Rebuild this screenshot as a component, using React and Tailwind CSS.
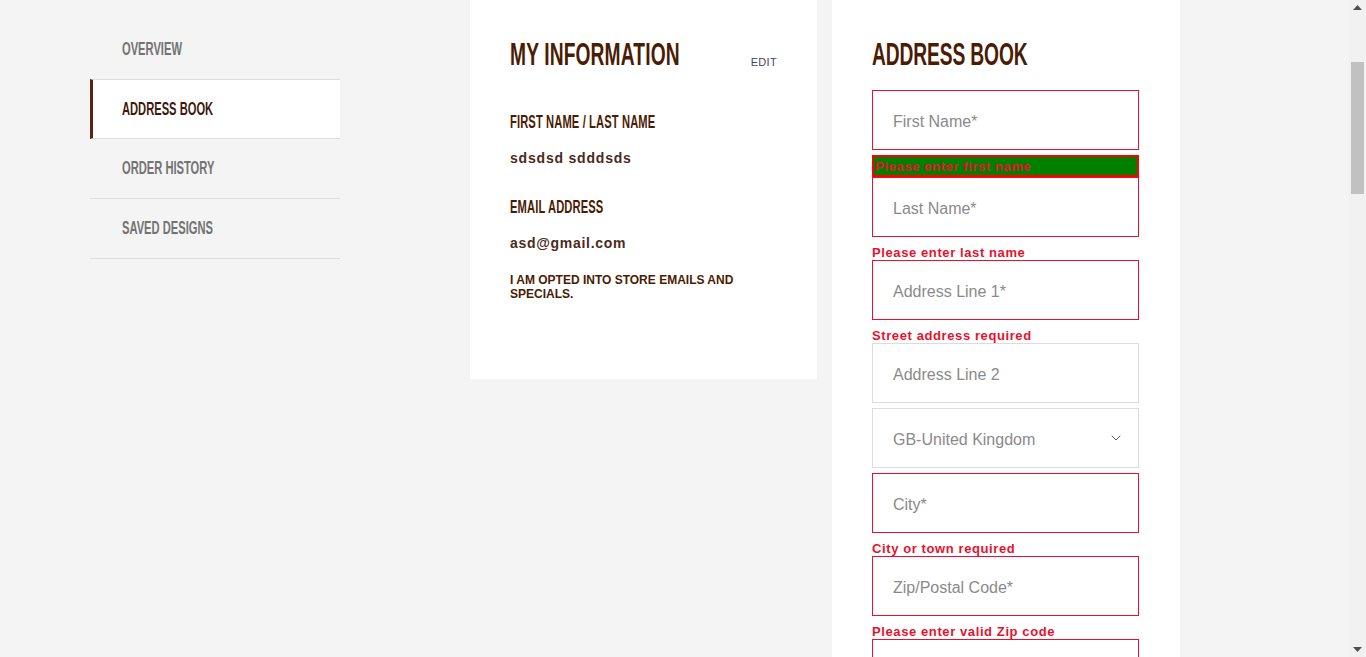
import { ChevronDown } from "lucide-react";

const body = "font-['Liberation_Sans',Arial,sans-serif]";

// condensed headline look: Arial-metric bold squeezed horizontally
const Cond = ({ className = "", children }) => (
  <span
    className={`${body} inline-block origin-left scale-x-[0.62] whitespace-nowrap font-bold ${className}`}
  >
    {children}
  </span>
);

const navItems = [
  { label: "OVERVIEW", active: false },
  { label: "ADDRESS BOOK", active: true },
  { label: "ORDER HISTORY", active: false },
  { label: "SAVED DESIGNS", active: false },
];

const Field = ({ placeholder, error, select }) => (
  <div
    className={`h-[60px] flex items-center justify-between px-5 bg-white border ${
      error ? "border-[#e8112d]" : "border-[#dcdcdc]"
    }`}
  >
    <span className={`${body} pt-[3px] text-[16px] text-[#8a8a8a]`}>{placeholder}</span>
    {select && <ChevronDown className="w-4 h-4 text-[#555] mr-[-6px]" strokeWidth={1.5} />}
  </div>
);

const ErrorText = ({ children }) => (
  <div className={`${body} mt-[5px] h-[18px] leading-[21px] text-[13px] font-bold tracking-[0.6px] text-[#e8112d]`}>
    {children}
  </div>
);

const App = () => {
  return (
    <div className="h-[657px] w-[1366px] overflow-hidden flex bg-[#f4f4f4]">
      <div className="flex-1 flex items-start pl-[90px]">
        {/* sidebar */}
        <nav className="w-[250px] mt-[19px]">
          {navItems.map((item, i) => (
            <div
              key={item.label}
              className={`h-[60px] flex items-center ${i > 0 ? "border-b border-[#dddddd]" : ""} ${
                item.active
                  ? "bg-white border-l-[3px] border-l-[#5b2313] pl-[29px] border-t border-t-[#dddddd]"
                  : "pl-[32px]"
              }`}
            >
              <Cond className={`text-[18px] ${item.active ? "text-[#3d1a0c]" : "text-[#737373]"}`}>
                {item.label}
              </Cond>
            </div>
          ))}
        </nav>

        {/* my information */}
        <section className="ml-[130px] w-[347px] h-[379px] bg-white px-10 pt-[35px] text-[#4a1c04]">
          <div className="flex items-start">
            <h1 className="w-[180px] leading-[40px]">
              <Cond className="text-[31px] tracking-[0.2px]">MY INFORMATION</Cond>
            </h1>
            <span className={`${body} ml-auto text-[11px] text-[#4b4560] mt-[19px] tracking-[0.3px]`}>EDIT</span>
          </div>
          <h2 className="mt-[31px] leading-[24px]">
            <Cond className="text-[18px] tracking-[0.2px]">FIRST NAME / LAST NAME</Cond>
          </h2>
          <p className={`${body} text-[14px] font-bold tracking-[0.8px] mt-[14px] text-[#4a2a1c]`}>sdsdsd sdddsds</p>
          <h2 className="mt-[26px] leading-[24px]">
            <Cond className="text-[18px] tracking-[0.2px]">EMAIL ADDRESS</Cond>
          </h2>
          <p className={`${body} text-[14px] font-bold tracking-[0.7px] mt-[14px] text-[#4a2a1c]`}>asd@gmail.com</p>
          <p className={`${body} text-[12px] font-bold leading-[14px] mt-[19px] text-[#4a1c04]`}>
            I AM OPTED INTO STORE EMAILS AND SPECIALS.
          </p>
        </section>

        {/* address book */}
        <section className="ml-[15px] w-[348px] h-[657px] bg-white pl-10 pr-[41px] pt-[35px]">
          <h1 className="leading-[40px] text-[#4a1c04]">
            <Cond className="text-[31px] tracking-[-0.2px]">ADDRESS BOOK</Cond>
          </h1>
          <div className="mt-[11px] flex flex-col">
            <Field placeholder="First Name*" error />
            <div
              className={`${body} mt-[5px] h-[22px] leading-[19px] bg-[#008000] border-2 border-[#ff0000] text-[13px] font-bold tracking-[0.6px] text-[#e8112d] pl-[1px]`}
            >
              Please enter first name
            </div>
            <Field placeholder="Last Name*" error />
            <ErrorText>Please enter last name</ErrorText>
            <Field placeholder="Address Line 1*" error />
            <ErrorText>Street address required</ErrorText>
            <Field placeholder="Address Line 2" />
            <div className="h-[5px]" />
            <Field placeholder="GB-United Kingdom" select />
            <div className="h-[5px]" />
            <Field placeholder="City*" error />
            <ErrorText>City or town required</ErrorText>
            <Field placeholder="Zip/Postal Code*" error />
            <ErrorText>Please enter valid Zip code</ErrorText>
            <Field placeholder="" error />
          </div>
        </section>
      </div>

      {/* scrollbar */}
      <div className="w-[17px] h-full bg-[#f1f1f1] flex flex-col items-center justify-between py-[5px]">
        <svg width="9" height="5" viewBox="0 0 9 5">
          <path d="M0 5 L4.5 0 L9 5 Z" fill="#505050" />
        </svg>
        <div className="flex-1 w-full flex flex-col items-center">
          <div className="mt-[52px] w-[13px] h-[132px] bg-[#c1c1c1]" />
        </div>
        <svg width="9" height="5" viewBox="0 0 9 5">
          <path d="M0 0 L4.5 5 L9 0 Z" fill="#505050" />
        </svg>
      </div>
    </div>
  );
};

export default App;
